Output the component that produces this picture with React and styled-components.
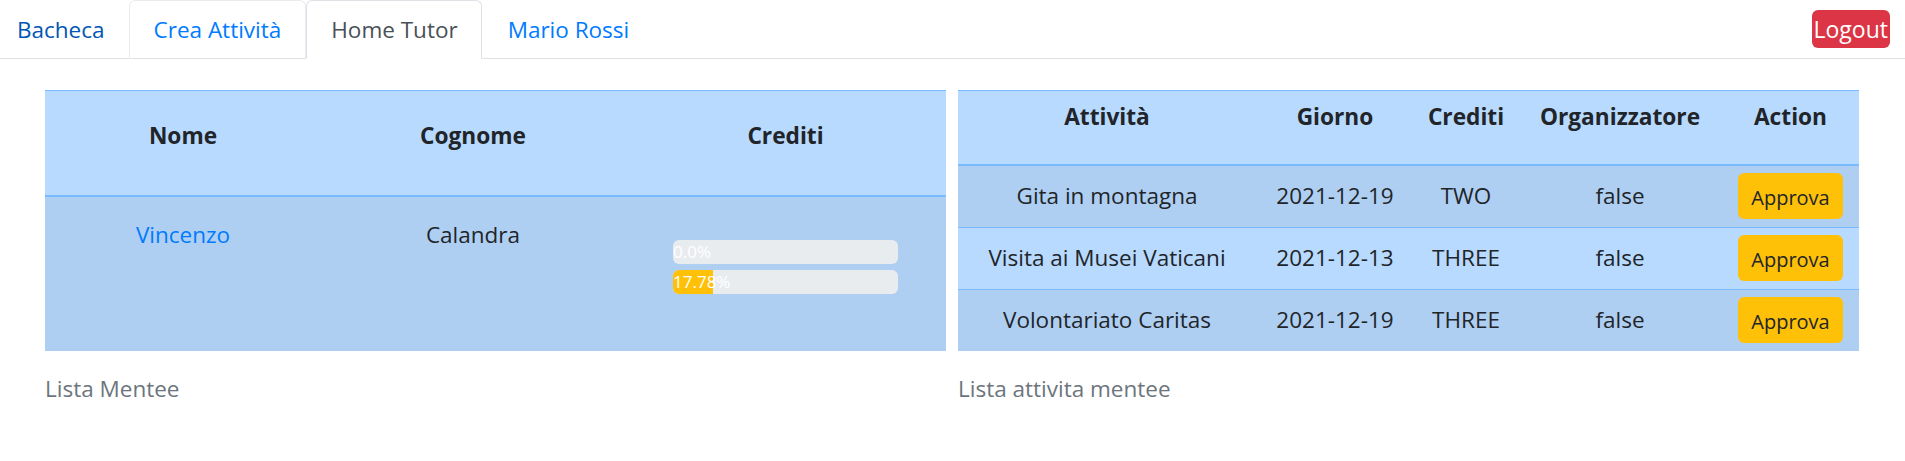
import React from "react";
import styled, { createGlobalStyle } from "styled-components";

const GlobalStyle = createGlobalStyle`
  *, *::before, *::after { box-sizing: border-box; }
  body {
    margin: 0;
    font-family: "Open Sans", "Noto Sans", sans-serif;
    color: #212529;
    background: #fff;
  }
`;

const tabs = [
  { label: "Bacheca", color: "#0056b3", border: "transparent", pl: 16, pr: 23 },
  { label: "Crea Attività", color: "#007bff", border: "#e9ecef", pl: 24, pr: 24 },
  { label: "Home Tutor", color: "#495057", border: "#dee2e6", active: true, pl: 24, pr: 23 },
  { label: "Mario Rossi", color: "#007bff", border: "transparent", pl: 25, pr: 25 },
];

const mentees = [
  { nome: "Vincenzo", cognome: "Calandra", crediti: [{ value: 0, label: "0.0%" }, { value: 17.78, label: "17.78%" }] },
];

const attivita = [
  { nome: "Gita in montagna", giorno: "2021-12-19", crediti: "TWO", org: "false" },
  { nome: "Visita ai Musei Vaticani", giorno: "2021-12-13", crediti: "THREE", org: "false" },
  { nome: "Volontariato Caritas", giorno: "2021-12-19", crediti: "THREE", org: "false" },
];

const Nav = styled.nav`
  display: flex;
  align-items: flex-start;
  height: 59px;
  border-bottom: 1px solid #dee2e6;
`;

const Tab = styled.a`
  display: block;
  margin-bottom: -1px;
  padding: 12px ${(p) => p.$pr}px 11px ${(p) => p.$pl}px;
  font-size: 22.5px;
  line-height: 34px;
  white-space: nowrap;
  text-decoration: none;
  cursor: pointer;
  color: ${(p) => p.$color};
  background: ${(p) => (p.$active ? "#fff" : "transparent")};
  border: 1px solid ${(p) => p.$border};
  border-bottom-color: ${(p) => (p.$active ? "#fff" : "transparent")};
  border-radius: 6px 6px 0 0;
`;

const Logout = styled.button`
  margin: 10px 15px 0 auto;
  height: 38px;
  padding: 0 2px;
  border: none;
  border-radius: 6px;
  background: #dc3545;
  color: #fff;
  font-family: inherit;
  font-size: 23px;
  line-height: 38px;
`;

const Main = styled.main`
  display: flex;
  gap: 12px;
  padding: 31px 46px 0 45px;
`;

const Table = styled.table`
  width: 901px;
  table-layout: fixed;
  border-collapse: collapse;
  caption-side: bottom;
  font-size: 22.5px;
  line-height: 34px;
`;

const Caption = styled.caption`
  text-align: left;
  color: #6c757d;
  padding-top: 21px;
`;

const Col = styled.col`
  width: ${(p) => p.$w}px;
`;

const HeadRow = styled.tr`
  background: #b8daff;
`;

const Th = styled.th`
  padding: ${(p) => p.$pt}px 12px ${(p) => p.$pb}px;
  border-top: 1px solid #7abaff;
  border-bottom: 2px solid #7abaff;
  font-size: 22.7px;
  font-weight: 700;
  text-align: center;
  vertical-align: top;
  white-space: nowrap;
`;

const Row = styled.tr`
  background: ${(p) => (p.$striped ? "#afcff2" : "#b8daff")};
`;

const Td = styled.td`
  height: ${(p) => p.$h}px;
  padding: ${(p) => p.$pt || 0}px 12px 0;
  border-top: 1px solid #7abaff;
  text-align: center;
  vertical-align: ${(p) => (p.$top ? "top" : "middle")};
  white-space: nowrap;
`;

const NameLink = styled.a`
  color: #007bff;
  text-decoration: none;
`;

const Progress = styled.div`
  display: flex;
  width: 225px;
  height: 24px;
  margin: 0 auto 6px;
  background: #e9ecef;
  border-radius: 6px;
`;

const ProgressFill = styled.div`
  height: 100%;
  background: #ffc107;
  border-radius: 6px 0 0 6px;
  color: #fff;
  font-size: 17px;
  line-height: 24px;
  text-align: left;
  white-space: nowrap;
`;

const Approve = styled.button`
  height: 46px;
  padding: 3px 13px 0;
  border: none;
  border-radius: 6px;
  background: #ffc107;
  color: #212529;
  font-family: inherit;
  font-size: 20px;
  line-height: 43px;
`;

const MenteeTable = () => (
  <Table>
    <colgroup>
      <Col $w={276} />
      <Col $w={304} />
      <Col $w={321} />
    </colgroup>
    <thead>
      <HeadRow>
        {["Nome", "Cognome", "Crediti"].map((h) => (
          <Th key={h} $pt={28} $pb={42}>{h}</Th>
        ))}
      </HeadRow>
    </thead>
    <tbody>
      {mentees.map((m, i) => (
        <Row key={m.nome} $striped={i % 2 === 0}>
          <Td $h={154} $pt={21} $top>
            <NameLink>{m.nome}</NameLink>
          </Td>
          <Td $h={154} $pt={21} $top>{m.cognome}</Td>
          <Td $h={154} $pt={43} $top>
            {m.crediti.map((c) => (
              <Progress key={c.label}>
                <ProgressFill style={{ width: `${c.value}%` }}>{c.label}</ProgressFill>
              </Progress>
            ))}
          </Td>
        </Row>
      ))}
    </tbody>
    <Caption>Lista Mentee</Caption>
  </Table>
);

const AttivitaTable = () => (
  <Table>
    <colgroup>
      <Col $w={298} />
      <Col $w={158} />
      <Col $w={104} />
      <Col $w={204} />
      <Col $w={137} />
    </colgroup>
    <thead>
      <HeadRow>
        {["Attività", "Giorno", "Crediti", "Organizzatore", "Action"].map((h) => (
          <Th key={h} $pt={9} $pb={30}>{h}</Th>
        ))}
      </HeadRow>
    </thead>
    <tbody>
      {attivita.map((a, i) => (
        <Row key={a.nome} $striped={i % 2 === 0}>
          <Td $h={62}>{a.nome}</Td>
          <Td $h={62}>{a.giorno}</Td>
          <Td $h={62}>{a.crediti}</Td>
          <Td $h={62}>{a.org}</Td>
          <Td $h={62}>
            <Approve>Approva</Approve>
          </Td>
        </Row>
      ))}
    </tbody>
    <Caption>Lista attivita mentee</Caption>
  </Table>
);

export default function App() {
  return (
    <>
      <GlobalStyle />
      <Nav>
        {tabs.map((t) => (
          <Tab key={t.label} $color={t.color} $border={t.border} $active={t.active} $pl={t.pl} $pr={t.pr}>
            {t.label}
          </Tab>
        ))}
        <Logout>Logout</Logout>
      </Nav>
      <Main>
        <MenteeTable />
        <AttivitaTable />
      </Main>
    </>
  );
}
